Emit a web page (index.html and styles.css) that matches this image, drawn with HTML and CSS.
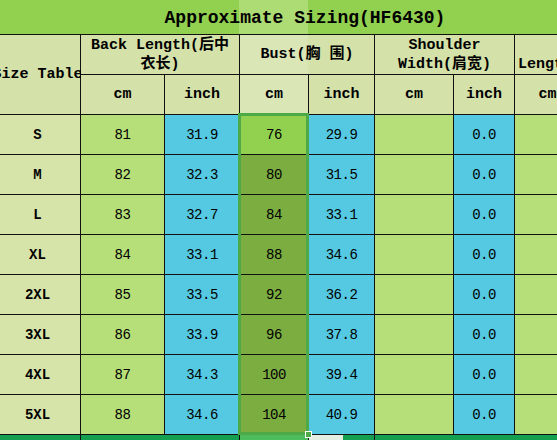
FILE: index.html
```html
<!DOCTYPE html>
<html>
<head>
<meta charset="utf-8">
<link rel="stylesheet" href="styles.css">
</head>
<body>
<div class="wrap">
  <div class="sheet">
    <div class="c title">Approximate Sizing(HF6430)</div>

    <div class="c hd size-head">Size Table</div>
    <div class="c hd span2 two">Back Length(后中<br>衣长)</div>
    <div class="c hd span2 bust-head">Bust(胸 围)</div>
    <div class="c hd span2 two">Shoulder<br>Width(肩宽)</div>
    <div class="c hd span2 last">Length(衣长)</div>

    <div class="c hd">cm</div>
    <div class="c hd">inch</div>
    <div class="c hd sel-hd">cm</div>
    <div class="c hd">inch</div>
    <div class="c hd">cm</div>
    <div class="c hd">inch</div>
    <div class="c hd">cm</div>
    <div class="c hd">inch</div>

    <div class="c sz">S</div><div class="c g">81</div><div class="c b">31.9</div><div class="c act">76</div><div class="c b">29.9</div><div class="c g"></div><div class="c b">0.0</div><div class="c g"></div><div class="c b"></div>
    <div class="c sz">M</div><div class="c g">82</div><div class="c b">32.3</div><div class="c sh">80</div><div class="c b">31.5</div><div class="c g"></div><div class="c b">0.0</div><div class="c g"></div><div class="c b"></div>
    <div class="c sz">L</div><div class="c g">83</div><div class="c b">32.7</div><div class="c sh">84</div><div class="c b">33.1</div><div class="c g"></div><div class="c b">0.0</div><div class="c g"></div><div class="c b"></div>
    <div class="c sz">XL</div><div class="c g">84</div><div class="c b">33.1</div><div class="c sh">88</div><div class="c b">34.6</div><div class="c g"></div><div class="c b">0.0</div><div class="c g"></div><div class="c b"></div>
    <div class="c sz">2XL</div><div class="c g">85</div><div class="c b">33.5</div><div class="c sh">92</div><div class="c b">36.2</div><div class="c g"></div><div class="c b">0.0</div><div class="c g"></div><div class="c b"></div>
    <div class="c sz">3XL</div><div class="c g">86</div><div class="c b">33.9</div><div class="c sh">96</div><div class="c b">37.8</div><div class="c g"></div><div class="c b">0.0</div><div class="c g"></div><div class="c b"></div>
    <div class="c sz">4XL</div><div class="c g">87</div><div class="c b">34.3</div><div class="c sh">100</div><div class="c b">39.4</div><div class="c g"></div><div class="c b">0.0</div><div class="c g"></div><div class="c b"></div>
    <div class="c sz">5XL</div><div class="c g">88</div><div class="c b">34.6</div><div class="c sh">104</div><div class="c b">40.9</div><div class="c g"></div><div class="c b">0.0</div><div class="c g"></div><div class="c b"></div>

    <div class="c foot"></div>
    <div class="c foot span2"></div>
    <div class="c foot-sel"></div>
    <div class="c foot foot-handle"></div>
    <div class="c foot span4"></div>
  </div>
  <div class="selection"><span class="handle"></span></div>
</div>
</body>
</html>
```

FILE: styles.css
```css
html, body {
  margin: 0;
  padding: 0;
  background: #ffffff;
  overflow: hidden;
}

.wrap {
  position: relative;
  width: 557px;
  height: 440px;
  overflow: hidden;
}

.sheet {
  display: grid;
  grid-template-columns: 80px 83px 74px 68px 65px 78px 60px 65px 29px;
  grid-template-rows: 34px 39px 39px repeat(8, 39px) 6px;
  gap: 1px;
  background: #111;
  width: 610px;
  font-family: "Liberation Mono", "Noto Sans CJK SC", monospace;
  color: #000;
}

.c {
  display: flex;
  align-items: center;
  justify-content: center;
  white-space: nowrap;
  font-size: 14px;
  letter-spacing: -0.5px;
}

.title {
  grid-column: 1 / -1;
  background: linear-gradient(to right, #92d050 0, #92d050 239px, #addb74 239px, #addb74 308px, #92d050 308px);
  font-size: 18px;
  font-weight: bold;
  letter-spacing: 0;
  padding-top: 2px;
}

.hd {
  background: #d4e1a9;
  font-weight: bold;
  font-size: 15px;
  letter-spacing: 0;
  text-align: center;
  line-height: 19px;
}

.span2 { grid-column: span 2; }
.span4 { grid-column: span 4; }

.size-head {
  grid-row: span 2;
  padding-right: 5px;
}

.two {
  padding-top: 1px;
}

.bust-head {
  background: linear-gradient(to right, #dbe6b7 0, #dbe6b7 68px, #d4e1a9 68px);
}

.sel-hd {
  background: #dbe6b7;
}

.last {
  justify-content: flex-start;
  align-items: flex-end;
  padding-left: 3px;
  padding-bottom: 0;
}

.sz {
  background: #d7e4a9;
  font-weight: bold;
  font-size: 14px;
  letter-spacing: 0;
  padding-right: 5px;
}

.g { background: #b7df79; }
.b { background: #55c9e1; }
.act { background: #92d150; }
.sh { background: #7cad41; }

.foot { background: #14a050; }
.foot-sel { background: #4cbc5c; }
.foot-handle {
  background: linear-gradient(to right, #e4efe4 0, #e4efe4 34px, #14a050 34px);
}

.selection {
  position: absolute;
  left: 238px;
  top: 113px;
  width: 71px;
  height: 322px;
  border: 3px solid #4daa47;
  box-sizing: border-box;
  pointer-events: none;
}

.handle {
  position: absolute;
  right: -6px;
  bottom: -6px;
  width: 5px;
  height: 5px;
  background: #4daa47;
  border: 1px solid #ffffff;
}
```
